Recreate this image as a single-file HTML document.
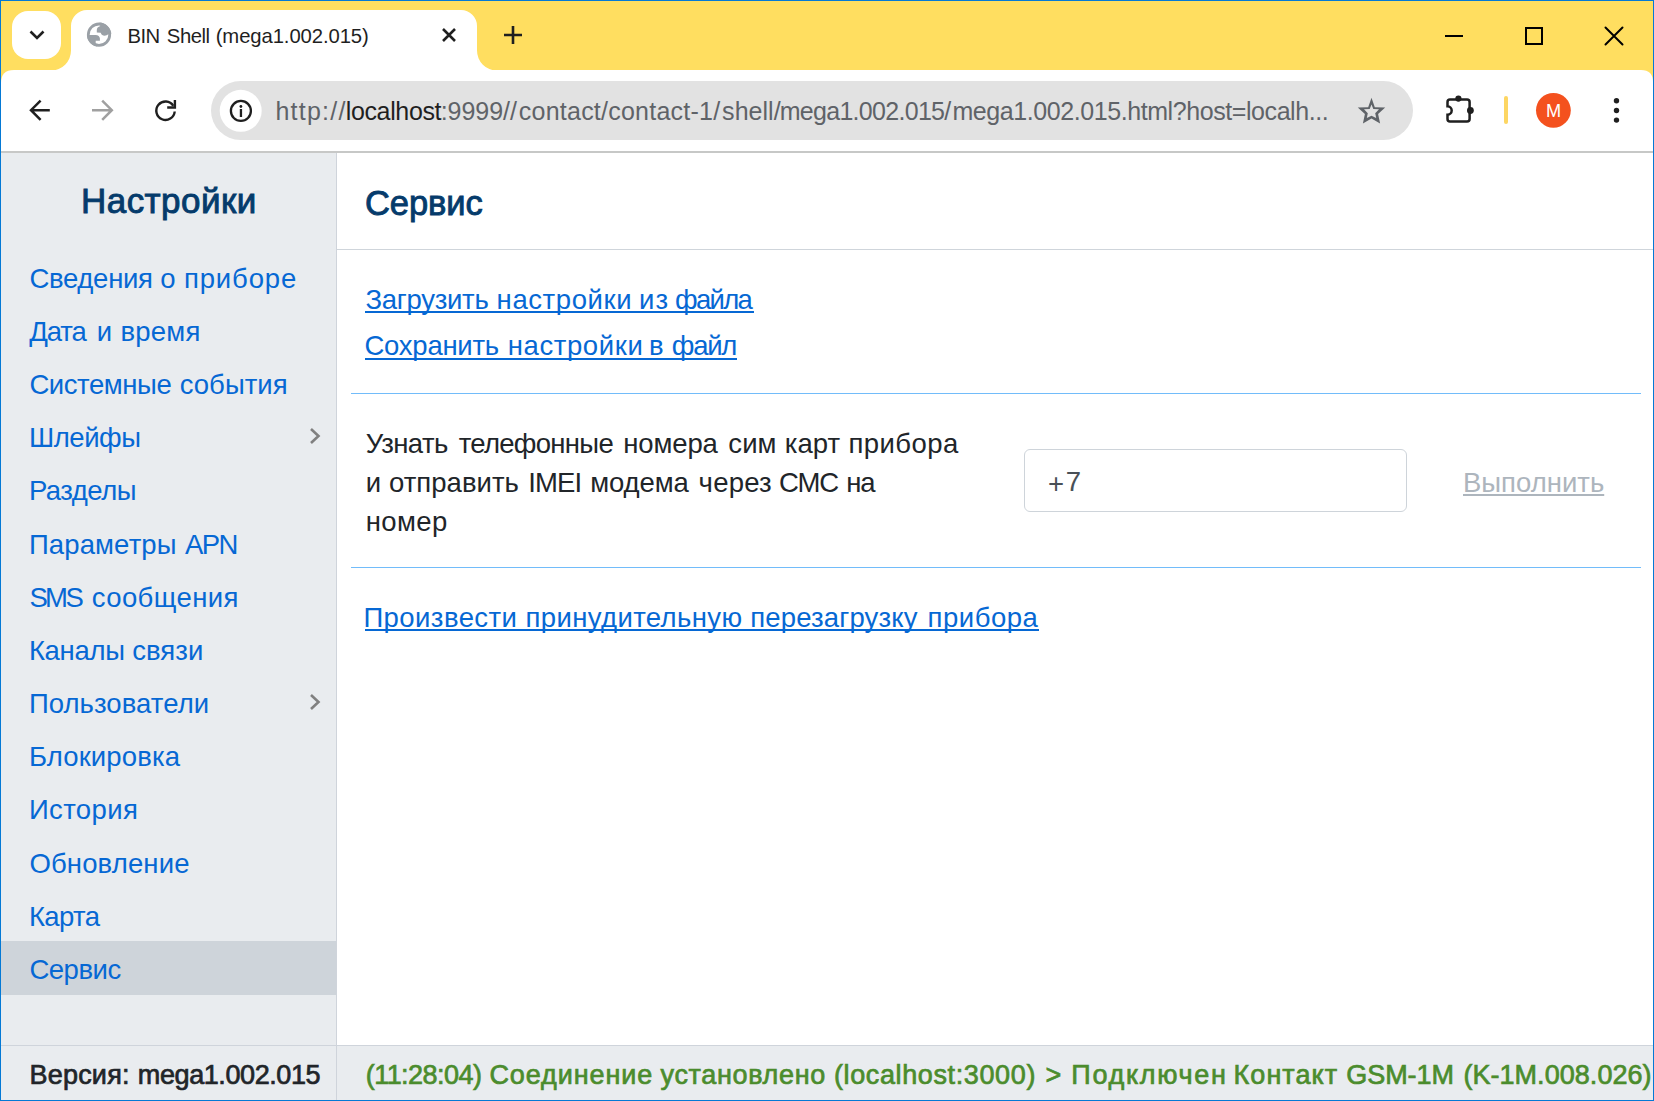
<!DOCTYPE html>
<html><head><meta charset="utf-8">
<style>
html,body{margin:0;padding:0;}
body{width:1654px;height:1101px;position:relative;overflow:hidden;background:#fff;font-family:"Liberation Sans",sans-serif;}
.abs{position:absolute;}
.t{position:absolute;white-space:nowrap;line-height:1;}
#chrome{position:absolute;left:0;top:0;}
#side{position:absolute;left:1px;top:153px;width:335px;height:892px;background:#e9ecef;}
#sideb{position:absolute;left:336px;top:153px;width:1px;height:947px;background:#cfd4db;}
.nav{position:absolute;left:29.5px;font-size:27.5px;color:#0668d4;}
#foot{position:absolute;left:1px;top:1045px;width:1652px;height:55px;background:#e9ecef;border-top:1px solid #cfd4db;box-sizing:border-box;}
.st{top:1061.5px;font-size:27px;color:#4b8c2d;-webkit-text-stroke:0.7px #4b8c2d;}
#frame{position:absolute;left:0;top:0;width:1654px;height:1101px;box-sizing:border-box;border:1px solid #0479d5;pointer-events:none;}
</style></head>
<body>
<svg id="chrome" width="1654" height="153" viewBox="0 0 1654 153">
  <rect x="0" y="0" width="1654" height="100" fill="#ffde60"/>
  <path d="M1 83 Q1 70 14 70 H1641 Q1653 70 1653 82 V153 H1 Z" fill="#fff"/>
  <rect x="0" y="151" width="1654" height="2" fill="#c7c8c7"/>
  <!-- dropdown btn -->
  <rect x="12" y="11" width="49" height="48" rx="16" fill="#fff"/>
  <path d="M30.5 31.5 L37 38 L43.5 31.5" fill="none" stroke="#1f1f1f" stroke-width="2.6"/>
  <!-- active tab -->
  <path d="M51 70.5 A20 20 0 0 0 71 50.5 V26 A16 16 0 0 1 87 10 H461 A16 16 0 0 1 477 26 V50.5 A20 20 0 0 0 497 70.5 Z" fill="#fff"/>
  <!-- globe -->
  <circle cx="99" cy="34.7" r="10.7" fill="none" stroke="#9aa0a6" stroke-width="2.8"/>
  <path d="M99.5 22.6 L100.4 25.9 C98 26.6 96.8 27.8 96.8 30 L96.8 32.6 L100.7 32.8 C101.5 35 102.7 35.7 104.6 35.7 C106 35.7 107.3 35.1 108.3 34.3 L111.3 34 A12.2 12.2 0 0 0 99.5 22.6 Z" fill="#9aa0a6"/>
  <path d="M86.9 35 L95.6 35 C98.2 35 99.9 36.5 99.9 38.6 L99.9 40.8 L95.7 40.8 L95.7 44 L97.5 46.8 A12.2 12.2 0 0 1 86.9 35 Z" fill="#9aa0a6"/>
  <!-- tab close -->
  <path d="M443 29 L455 41 M455 29 L443 41" stroke="#1f1f1f" stroke-width="2.6"/>
  <!-- new tab plus -->
  <path d="M513 26 V44 M504 35 H522" stroke="#1f1f1f" stroke-width="2.6"/>
  <!-- window controls -->
  <rect x="1445" y="35" width="18" height="2" fill="#000"/>
  <rect x="1526" y="28" width="16" height="16" fill="none" stroke="#000" stroke-width="2"/>
  <path d="M1605.5 27.5 L1622.5 44.5 M1622.5 27.5 L1605.5 44.5" stroke="#000" stroke-width="2" stroke-linecap="round"/>
  <!-- back -->
  <path d="M49.8 110.2 H31.5 M40.6 100.6 L31 110.2 L40.6 119.8" fill="none" stroke="#1f1f1f" stroke-width="2.5"/>
  <!-- forward -->
  <path d="M92 110.2 H110.5 M102.2 100.6 L111.8 110.2 L102.2 119.8" fill="none" stroke="#a0a0a0" stroke-width="2.5"/>
  <!-- reload -->
  <path d="M174.7 111.5 A9.2 9.2 0 1 1 173.3 105.8" fill="none" stroke="#1f1f1f" stroke-width="2.4"/>
  <path d="M167.2 107.5 H174.9 V100" fill="none" stroke="#1f1f1f" stroke-width="2.4"/>
  <!-- omnibox -->
  <rect x="211" y="81" width="1202" height="59" rx="29.5" fill="#e2e2e2"/>
  <circle cx="240.7" cy="110.8" r="21" fill="#fff"/>
  <circle cx="240.9" cy="110.9" r="10" fill="none" stroke="#1f1f1f" stroke-width="2.3"/>
  <circle cx="240.9" cy="106.5" r="1.4" fill="#1f1f1f"/>
  <rect x="239.8" y="109" width="2.3" height="8" fill="#1f1f1f"/>
  <!-- star -->
  <path fill-rule="evenodd" d="M1371.5 97.7 L1374.8 107.2 L1385.2 107.5 L1378.1 113.9 L1380.1 123.4 L1371.5 118.6 L1362.9 123.4 L1364.9 113.9 L1357.8 107.5 L1368.2 107.2 Z M1371.5 104.6 L1373.3 108.9 L1379 109.2 L1375.2 113.3 L1376.2 118.1 L1371.5 115.7 L1366.8 118.1 L1367.8 113.3 L1364 109.2 L1369.7 108.9 Z" fill="#5f6368"/>
  <!-- puzzle -->
  <path d="M1447.5 106.3 V102 Q1447.5 99.5 1450 99.5 H1467 Q1469.6 99.5 1469.6 102 V119 Q1469.6 121.5 1467 121.5 H1450 Q1447.5 121.5 1447.5 119 V114.7 A4.2 4.2 0 0 0 1447.5 106.3 Z" fill="none" stroke="#1f1f1f" stroke-width="2.5"/>
  <circle cx="1458.4" cy="98.6" r="3.1" fill="#1f1f1f"/>
  <circle cx="1470.4" cy="110.5" r="3.4" fill="#1f1f1f"/>
  <!-- yellow bar -->
  <rect x="1504" y="96" width="4" height="28" rx="2" fill="#fdd663"/>
  <!-- avatar -->
  <circle cx="1553.4" cy="110.3" r="17.4" fill="#f4511e"/>
  <!-- kebab -->
  <circle cx="1616.5" cy="100.8" r="2.7" fill="#1f1f1f"/>
  <circle cx="1616.5" cy="110.5" r="2.7" fill="#1f1f1f"/>
  <circle cx="1616.5" cy="120.1" r="2.7" fill="#1f1f1f"/>
</svg>
<div class="t" style="left:127.6px;top:26.4px;font-size:20.3px;color:#1f1f1f;letter-spacing:-0.631px">BIN</div><div class="t" style="left:166.8px;top:26.4px;font-size:20.3px;color:#1f1f1f;letter-spacing:-0.448px">Shell</div><div class="t" style="left:215.7px;top:26.4px;font-size:20.3px;color:#1f1f1f;letter-spacing:-0.101px">(mega1.002.015)</div>
<div class="t" style="left:1546px;top:102.1px;font-size:18.2px;color:#fff;">M</div>
<div class="t" style="left:275.5px;top:99px;font-size:25px;color:#5f6368;letter-spacing:1.218px">http://</div><div class="t" style="left:345.7px;top:99px;font-size:25px;color:#1f1f1f;letter-spacing:-0.353px">localhost</div><div class="t" style="left:440.7px;top:99px;font-size:25px;color:#5f6368;letter-spacing:-0.034px">:9999//</div><div class="t" style="left:518.8px;top:99px;font-size:25px;color:#5f6368;letter-spacing:0.236px">contact/contact-1/</div><div class="t" style="left:722.1px;top:99px;font-size:25px;color:#5f6368;letter-spacing:0.037px">shell/</div><div class="t" style="left:779.7px;top:99px;font-size:25px;color:#5f6368;letter-spacing:-0.704px">mega1.002.015/</div><div class="t" style="left:952.4px;top:99px;font-size:25px;color:#5f6368;letter-spacing:-0.422px">mega1.002.015.html?host=localh...</div>

<div id="side"></div>
<div class="abs" style="left:1px;top:941px;width:335px;height:54px;background:#ced4da;"></div>
<div id="sideb"></div>
<div class="t" style="left:81px;top:183px;font-size:35px;color:#053b6b;letter-spacing:0.45px;-webkit-text-stroke:0.9px #053b6b;">Настройки</div>
<div class="nav t" style="left:29.4px;top:264.70px;letter-spacing:-0.291px">Сведения</div>
<div class="nav t" style="left:160.3px;top:264.70px;letter-spacing:0px">о</div>
<div class="nav t" style="left:184px;top:264.70px;letter-spacing:0.836px">приборе</div>
<div class="nav t" style="left:29.2px;top:317.87px;letter-spacing:-1.067px">Дата</div>
<div class="nav t" style="left:96.8px;top:317.87px;letter-spacing:0px">и</div>
<div class="nav t" style="left:120.5px;top:317.87px;letter-spacing:0.224px">время</div>
<div class="nav t" style="left:29.4px;top:371.04px;letter-spacing:-0.426px">Системные</div>
<div class="nav t" style="left:179.7px;top:371.04px;letter-spacing:0.029px">события</div>
<div class="nav t" style="left:28.9px;top:424.21px;letter-spacing:-0.426px">Шлейфы</div>
<div class="nav t" style="left:28.9px;top:477.38px;letter-spacing:-0.515px">Разделы</div>
<div class="nav t" style="left:28.9px;top:530.55px;letter-spacing:0.134px">Параметры</div>
<div class="nav t" style="left:185.0px;top:530.55px;letter-spacing:-1.542px">APN</div>
<div class="nav t" style="left:29.4px;top:583.72px;letter-spacing:-2.625px">SMS</div>
<div class="nav t" style="left:91.7px;top:583.72px;letter-spacing:0.418px">сообщения</div>
<div class="nav t" style="left:28.9px;top:636.89px;letter-spacing:-0.308px">Каналы</div>
<div class="nav t" style="left:132.3px;top:636.89px;letter-spacing:0.012px">связи</div>
<div class="nav t" style="left:28.9px;top:690.06px;letter-spacing:0.07px">Пользователи</div>
<div class="nav t" style="left:28.9px;top:743.23px;letter-spacing:0.132px">Блокировка</div>
<div class="nav t" style="left:28.9px;top:796.40px;letter-spacing:0.375px">История</div>
<div class="nav t" style="left:29.4px;top:849.57px;letter-spacing:0.146px">Обновление</div>
<div class="nav t" style="left:28.9px;top:902.74px;letter-spacing:-0.597px">Карта</div>
<div class="nav t" style="left:29.4px;top:955.91px;letter-spacing:-0.464px">Сервис</div>
<svg class="abs" style="left:300px;top:420px" width="30" height="300" viewBox="300 420 30 300">
  <path d="M311 429 L318.5 436 L311 443" fill="none" stroke="#808080" stroke-width="2.6"/>
  <path d="M311 695 L318.5 702 L311 709" fill="none" stroke="#808080" stroke-width="2.6"/>
</svg>
<div class="abs" style="left:337px;top:249px;width:1316px;height:1px;background:#cfd5db;"></div>
<div class="t" style="left:365px;top:185.5px;font-size:34.5px;color:#053b6b;letter-spacing:-0.1px;-webkit-text-stroke:0.9px #053b6b;">Сервис</div>
<div class="t" style="left:365.5px;top:285.5px;font-size:27.5px;color:#0668d4;letter-spacing:-0.292px">Загрузить</div>
<div class="t" style="left:496.6px;top:285.5px;font-size:27.5px;color:#0668d4;letter-spacing:0.599px">настройки</div>
<div class="t" style="left:639.1px;top:285.5px;font-size:27.5px;color:#0668d4;letter-spacing:0.939px">из</div>
<div class="t" style="left:675px;top:285.5px;font-size:27.5px;color:#0668d4;letter-spacing:-1.682px">файла</div>
<div class="t" style="left:364.5px;top:332.1px;font-size:27.5px;color:#0668d4;letter-spacing:-0.253px">Сохранить</div>
<div class="t" style="left:507.7px;top:332.1px;font-size:27.5px;color:#0668d4;letter-spacing:0.612px">настройки</div>
<div class="t" style="left:649px;top:332.1px;font-size:27.5px;color:#0668d4;letter-spacing:0px">в</div>
<div class="t" style="left:671.8px;top:332.1px;font-size:27.5px;color:#0668d4;letter-spacing:-1.26px">файл</div>
<div class="t" style="left:365.8px;top:429.7px;font-size:27.5px;color:#212529;letter-spacing:-0.561px">Узнать</div>
<div class="t" style="left:458.7px;top:429.7px;font-size:27.5px;color:#212529;letter-spacing:-0.707px">телефонные</div>
<div class="t" style="left:623.2px;top:429.7px;font-size:27.5px;color:#212529;letter-spacing:-0.115px">номера</div>
<div class="t" style="left:728.3px;top:429.7px;font-size:27.5px;color:#212529;letter-spacing:0.094px">сим</div>
<div class="t" style="left:784.7px;top:429.7px;font-size:27.5px;color:#212529;letter-spacing:0.06px">карт</div>
<div class="t" style="left:848.4px;top:429.7px;font-size:27.5px;color:#212529;letter-spacing:0.469px">прибора</div>
<div class="t" style="left:365.8px;top:468.8px;font-size:27.5px;color:#212529;letter-spacing:0px">и</div>
<div class="t" style="left:389px;top:468.8px;font-size:27.5px;color:#212529;letter-spacing:0.034px">отправить</div>
<div class="t" style="left:528.2px;top:468.8px;font-size:27.5px;color:#212529;letter-spacing:-0.863px">IMEI</div>
<div class="t" style="left:590.2px;top:468.8px;font-size:27.5px;color:#212529;letter-spacing:-0.109px">модема</div>
<div class="t" style="left:698.6px;top:468.8px;font-size:27.5px;color:#212529;letter-spacing:0.224px">через</div>
<div class="t" style="left:779.1px;top:468.8px;font-size:27.5px;color:#212529;letter-spacing:-1.129px">СМС</div>
<div class="t" style="left:846.2px;top:468.8px;font-size:27.5px;color:#212529;letter-spacing:-1.087px">на</div>
<div class="t" style="left:365.8px;top:507.5px;font-size:27.5px;color:#212529;letter-spacing:0.38px">номер</div>
<div class="t" style="left:363.4px;top:603.5px;font-size:27.5px;color:#0668d4;letter-spacing:0.437px">Произвести</div>
<div class="t" style="left:525.5px;top:603.5px;font-size:27.5px;color:#0668d4;letter-spacing:0.38px">принудительную</div>
<div class="t" style="left:750.2px;top:603.5px;font-size:27.5px;color:#0668d4;letter-spacing:0.156px">перезагрузку</div>
<div class="t" style="left:927.6px;top:603.5px;font-size:27.5px;color:#0668d4;letter-spacing:0.502px">прибора</div>
<div class="abs" style="left:365px;top:311px;width:389px;height:2px;background:#0668d4;"></div>
<div class="abs" style="left:365px;top:358px;width:372px;height:2px;background:#0668d4;"></div>
<div class="abs" style="left:365px;top:629px;width:674px;height:2px;background:#0668d4;"></div>


<div class="abs" style="left:351px;top:393px;width:1290px;height:1px;background:#72bcfa;"></div>

<div class="abs" style="left:1024px;top:449px;width:383px;height:63px;box-sizing:border-box;border:1px solid #ced4da;border-radius:6px;"></div>
<div class="t" style="left:1048px;top:470.2px;font-size:27.5px;color:#495057;">+</div><div class="t" style="left:1065.8px;top:468.4px;font-size:27.5px;color:#495057;">7</div>
<div class="t" style="left:1463px;top:468.6px;font-size:27.5px;color:#adb5bd;text-decoration:underline;">Выполнить</div>
<div class="abs" style="left:351px;top:567px;width:1290px;height:1px;background:#72bcfa;"></div>

<div id="foot"></div>
<div class="abs" style="left:336px;top:1045px;width:1px;height:55px;background:#cfd4db;"></div>
<div class="t" style="left:29.55px;top:1061.5px;font-size:27px;color:#212529;letter-spacing:0.193px;-webkit-text-stroke:0.7px #212529;">Версия:</div><div class="t" style="left:137.85px;top:1061.5px;font-size:27px;color:#212529;letter-spacing:-0.412px;-webkit-text-stroke:0.7px #212529;">mega1.002.015</div>
<div class="t st" style="left:365.7px;letter-spacing:-0.532px">(11:28:04)</div><div class="t st" style="left:489.4px;letter-spacing:0.912px">Соединение</div><div class="t st" style="left:660.6px;letter-spacing:0.649px">установлено</div><div class="t st" style="left:833.9px;letter-spacing:0.625px">(localhost:3000)</div><div class="t st" style="left:1045.4px;letter-spacing:0px">&gt;</div><div class="t st" style="left:1071.3px;letter-spacing:1.676px">Подключен</div><div class="t st" style="left:1233.6px;letter-spacing:1.042px">Контакт</div><div class="t st" style="left:1346.3px;letter-spacing:-0.082px">GSM-1M</div><div class="t st" style="left:1463.4px;letter-spacing:0.046px">(K-1M.008.026)</div>
<div id="frame"></div>
</body></html>
